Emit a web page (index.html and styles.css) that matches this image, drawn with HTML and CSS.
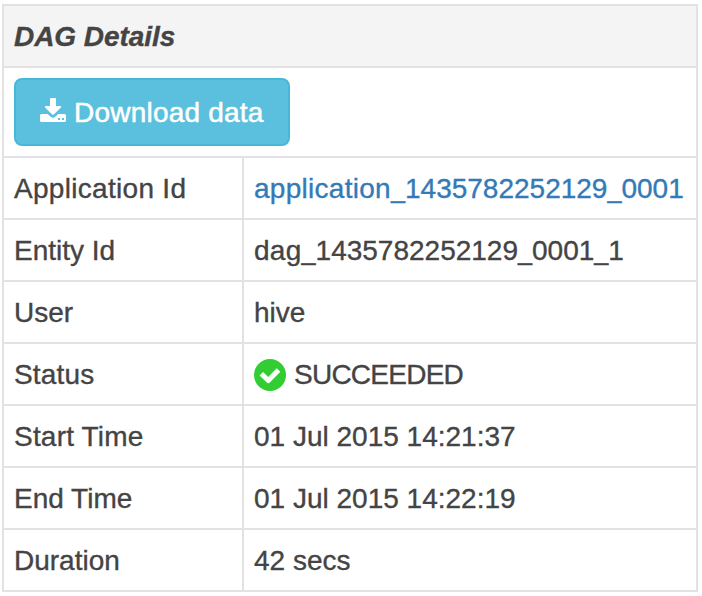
FILE: index.html
```html
<!DOCTYPE html>
<html lang="en">
<head>
<meta charset="utf-8">
<title>DAG Details</title>
<link rel="stylesheet" href="styles.css">
</head>
<body>
<table class="details">
<colgroup><col class="label-column"><col></colgroup>
<thead>
<tr><th colspan="2">DAG Details</th></tr>
</thead>
<tbody>
<tr class="actions"><td colspan="2"><button class="download" type="button"><svg class="download-icon" viewBox="0 0 26 24" aria-hidden="true"><path d="M11 0h4q1 0 1 1v7h4.300q1.500.2.600 1.600l-7.100 7q-.8.800-1.600 0l-7.100-7q-.9-1.400.6-1.600h4.300v-7q0-1 1-1z"/><path fill-rule="evenodd" d="M1.500 16h6.200l3 2.800q2.300 1.700 4.600 0l3-2.800h6.200q1.500 0 1.500 1.500v5q0 1.500-1.500 1.500h-23q-1.500 0-1.500-1.500v-5q0-1.500 1.500-1.500zM18 20v2h2v-2zM22 20v2h2v-2z"/></svg><span class="button-text">Download data</span></button></td></tr>
<tr><td class="app-label">Application Id</td><td><a href="#"><span class="prefix">application</span><span class="underscore">_</span>1435782252129<span class="underscore">_</span>0001</a></td></tr>
<tr><td>Entity Id</td><td><span class="prefix">dag</span><span class="underscore">_</span>1435782252129<span class="underscore">_</span>0001<span class="underscore">_</span>1</td></tr>
<tr><td>User</td><td>hive</td></tr>
<tr><td class="status-label">Status</td><td><div class="status"><svg class="check" viewBox="0 0 32 32" aria-hidden="true"><circle cx="16" cy="16" r="16"/><path d="M7.300 14.800L14.300 21.500L24.500 11"/></svg><span class="status-text">SUCCEEDED</span></div></td></tr>
<tr><td class="start-label">Start Time</td><td>01 Jul 2015 14:21:37</td></tr>
<tr><td>End Time</td><td>01 Jul 2015 14:22:19</td></tr>
<tr><td>Duration</td><td>42 secs</td></tr>
</tbody>
</table>
</body>
</html>
```

FILE: styles.css
```css
* { box-sizing: border-box; }
body { margin: 0; padding: 4px 0 0 2px; background: #fff; color: #444; font: 28px/40px "Liberation Sans", Arial, sans-serif; }
.details { width: 696px; table-layout: fixed; border-collapse: collapse; }
.label-column { width: 240px; }
th, td { height: 62px; padding: 2px 10px 0; border: 2px solid #e2e2e2; text-align: left; vertical-align: middle; white-space: nowrap; -webkit-text-stroke: .35px currentColor; }
th { background: #f4f4f4; font-style: italic; letter-spacing: -.05px; }
.actions td { height: 90px; padding-top: 0; }
a { color: #337ab7; text-decoration: none; }
.download { display: flex; align-items: center; gap: 8px; width: 276px; height: 68px; padding: 0 24px; border: 2px solid #46b8da; border-radius: 8px; background: #5bc0de; color: #fff; font: inherit; }
.download-icon { flex: none; width: 26px; height: 24px; margin-bottom: 4px; fill: #fff; }
.button-text { padding-top: 2px; letter-spacing: .22px; -webkit-text-stroke: .5px #fff; }
.app-label { letter-spacing: .3px; }
.start-label { letter-spacing: .2px; }
.status-label { letter-spacing: .15px; }
.prefix { letter-spacing: .28px; }
.underscore { font-size: 25.2px; line-height: 1; }
.status { display: flex; align-items: center; gap: 8px; }
.status-text { letter-spacing: -.75px; }
.check { width: 32px; height: 32px; fill: #32cd32; }
.check path { fill: none; stroke: #fff; stroke-width: 5; stroke-linejoin: round; }
```
